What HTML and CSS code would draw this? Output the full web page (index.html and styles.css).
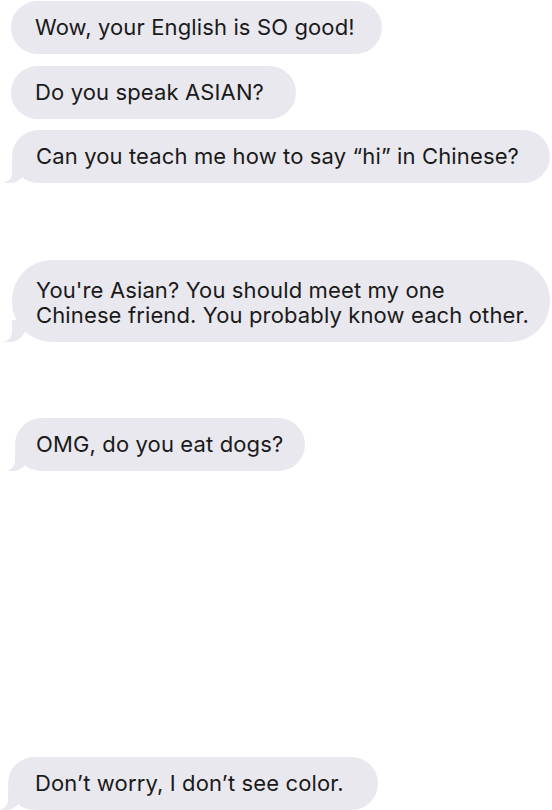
FILE: index.html
```html
<!DOCTYPE html>
<html>
<head>
<meta charset="utf-8">
<link rel="stylesheet" href="styles.css">
</head>
<body>
<div class="thread">
  <div class="bubble b1">Wow, your English is SO good!</div>
  <div class="bubble b2">Do you speak ASIAN?</div>
  <div class="bubble b3 tail">Can you teach me how to say “hi” in Chinese?</div>
  <div class="bubble b4 tail">You're Asian? You should meet my one<br>Chinese friend. You probably know each other.</div>
  <div class="bubble b5 tail">OMG, do you eat dogs?</div>
  <div class="bubble b6 tail">Don’t worry, I don’t see color.</div>
</div>
</body>
</html>
```
FILE: styles.css
```css
html, body {
  margin: 0;
  padding: 0;
  background: #ffffff;
}
.thread {
  display: flex;
  flex-direction: column;
  align-items: flex-start;
  padding-top: 1px;
  width: 552px;
  height: 810px;
  box-sizing: border-box;
}
.bubble {
  position: relative;
  background: #e9e8ee;
  color: #1a1a1a;
  font-family: Inter, "Liberation Sans", sans-serif;
  font-size: 22px;
  line-height: 25px;
  letter-spacing: 0.13px;
  padding: 14px 24px;
  border-radius: 27px;
  white-space: nowrap;
  box-sizing: border-box;
}
.b1 { margin-left: 11px; width: 371px; }
.b2 { margin-left: 11px; margin-top: 12px; width: 285px; }
.b3 { margin-left: 12px; margin-top: 11px; width: 538px; }
.b4 { margin-left: 12px; margin-top: 77px; width: 538px; padding-top: 18px; padding-bottom: 14px; border-radius: 40px; }
.b5 { margin-left: 15px; margin-top: 76px; width: 290px; padding-left: 21px; }
.b6 { margin-left: 8px; margin-top: 286px; width: 370px; padding-left: 27px; }
.tail::before {
  content: "";
  position: absolute;
  bottom: 0;
  left: -8px;
  width: 22px;
  height: 22px;
  background: #e9e8ee;
  border-bottom-right-radius: 16px;
}
.tail::after {
  content: "";
  position: absolute;
  bottom: 0;
  left: -12px;
  width: 12px;
  height: 23px;
  background: #ffffff;
  border-bottom-right-radius: 10px;
}
```
